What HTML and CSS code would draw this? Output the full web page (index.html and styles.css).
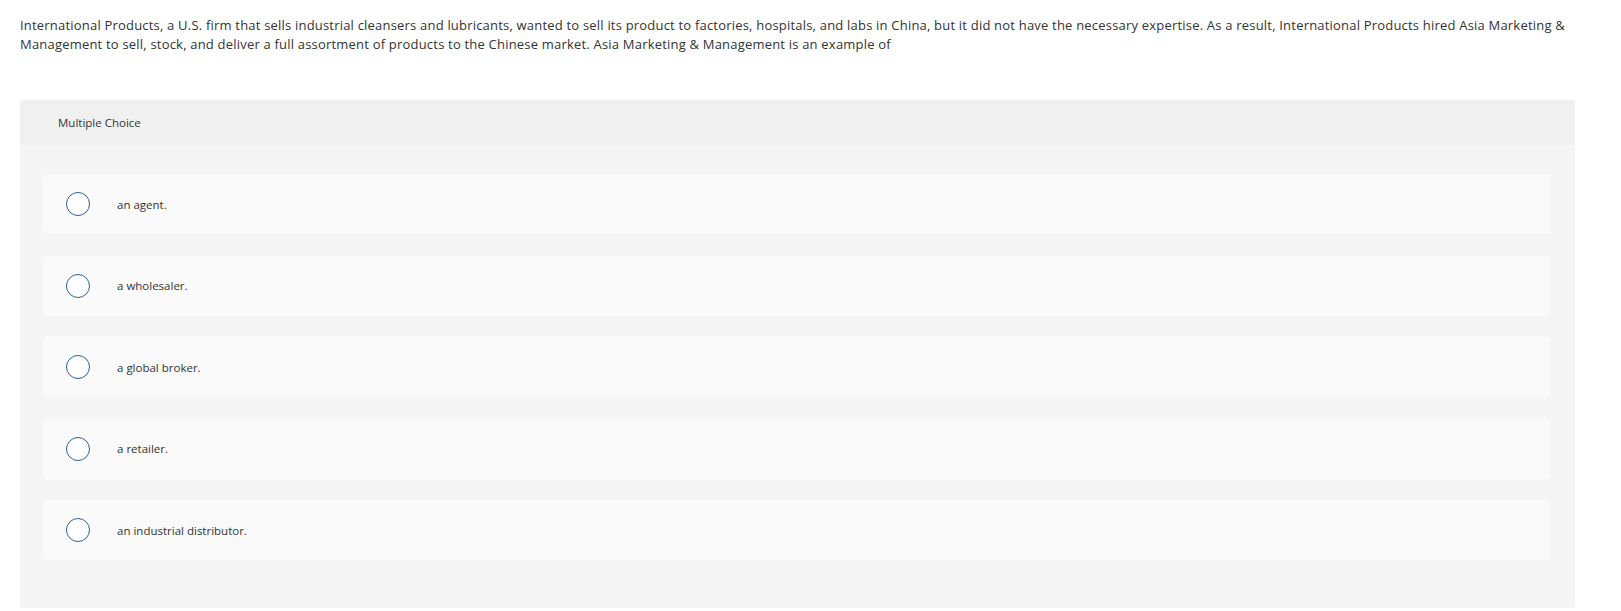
FILE: index.html
```html
<!DOCTYPE html>
<html>
<head>
<meta charset="utf-8">
<link rel="stylesheet" href="styles.css">
</head>
<body>
<div class="page">
  <p class="question">International Products, a U.S. firm that sells industrial cleansers and lubricants, wanted to sell its product to factories, hospitals, and labs in China, but it did not have the necessary expertise. As a result, International Products hired Asia Marketing &amp; Management to sell, stock, and deliver a full assortment of products to the Chinese market. Asia Marketing &amp; Management is an example of</p>
  <div class="mc">
    <div class="mc-head">Multiple Choice</div>
    <div class="mc-body">
      <div class="choice"><span class="radio"></span><span class="label">an agent.</span></div>
      <div class="choice"><span class="radio"></span><span class="label">a wholesaler.</span></div>
      <div class="choice"><span class="radio"></span><span class="label">a global broker.</span></div>
      <div class="choice"><span class="radio"></span><span class="label">a retailer.</span></div>
      <div class="choice"><span class="radio"></span><span class="label">an industrial distributor.</span></div>
    </div>
  </div>
</div>
</body>
</html>
```

FILE: styles.css
```css
html, body {
  margin: 0;
  padding: 0;
  background: #ffffff;
}
body {
  font-family: "Open Sans", "Liberation Sans", sans-serif;
  color: #333333;
}
.page {
  width: 1555px;
  padding: 0 0 0 20px;
}
.question {
  margin: 0;
  padding-top: 16px;
  font-size: 13px;
  letter-spacing: 0.2px;
  line-height: 19px;
  color: #333333;
}
.mc {
  margin-top: 46px;
  border-radius: 3px;
  overflow: hidden;
}
.mc-head {
  height: 45px;
  background: #f0f0f0;
  display: flex;
  align-items: center;
  padding-left: 38px;
  font-size: 11.5px;
  color: #333333;
}
.mc-body {
  background: #f5f5f5;
  padding: 29px 25px 48px 23px;
  display: flex;
  flex-direction: column;
  gap: 21.5px;
}
.choice {
  height: 60px;
  background: #fafafa;
  border-radius: 4px;
  display: flex;
  align-items: center;
  padding-left: 23px;
}
.radio {
  width: 22px;
  height: 22px;
  border: 1.5px solid #2b5f94;
  border-radius: 50%;
  background: #ffffff;
  flex: none;
}
.label {
  margin-left: 27px;
  font-size: 11.5px;
  color: #333333;
}
```
